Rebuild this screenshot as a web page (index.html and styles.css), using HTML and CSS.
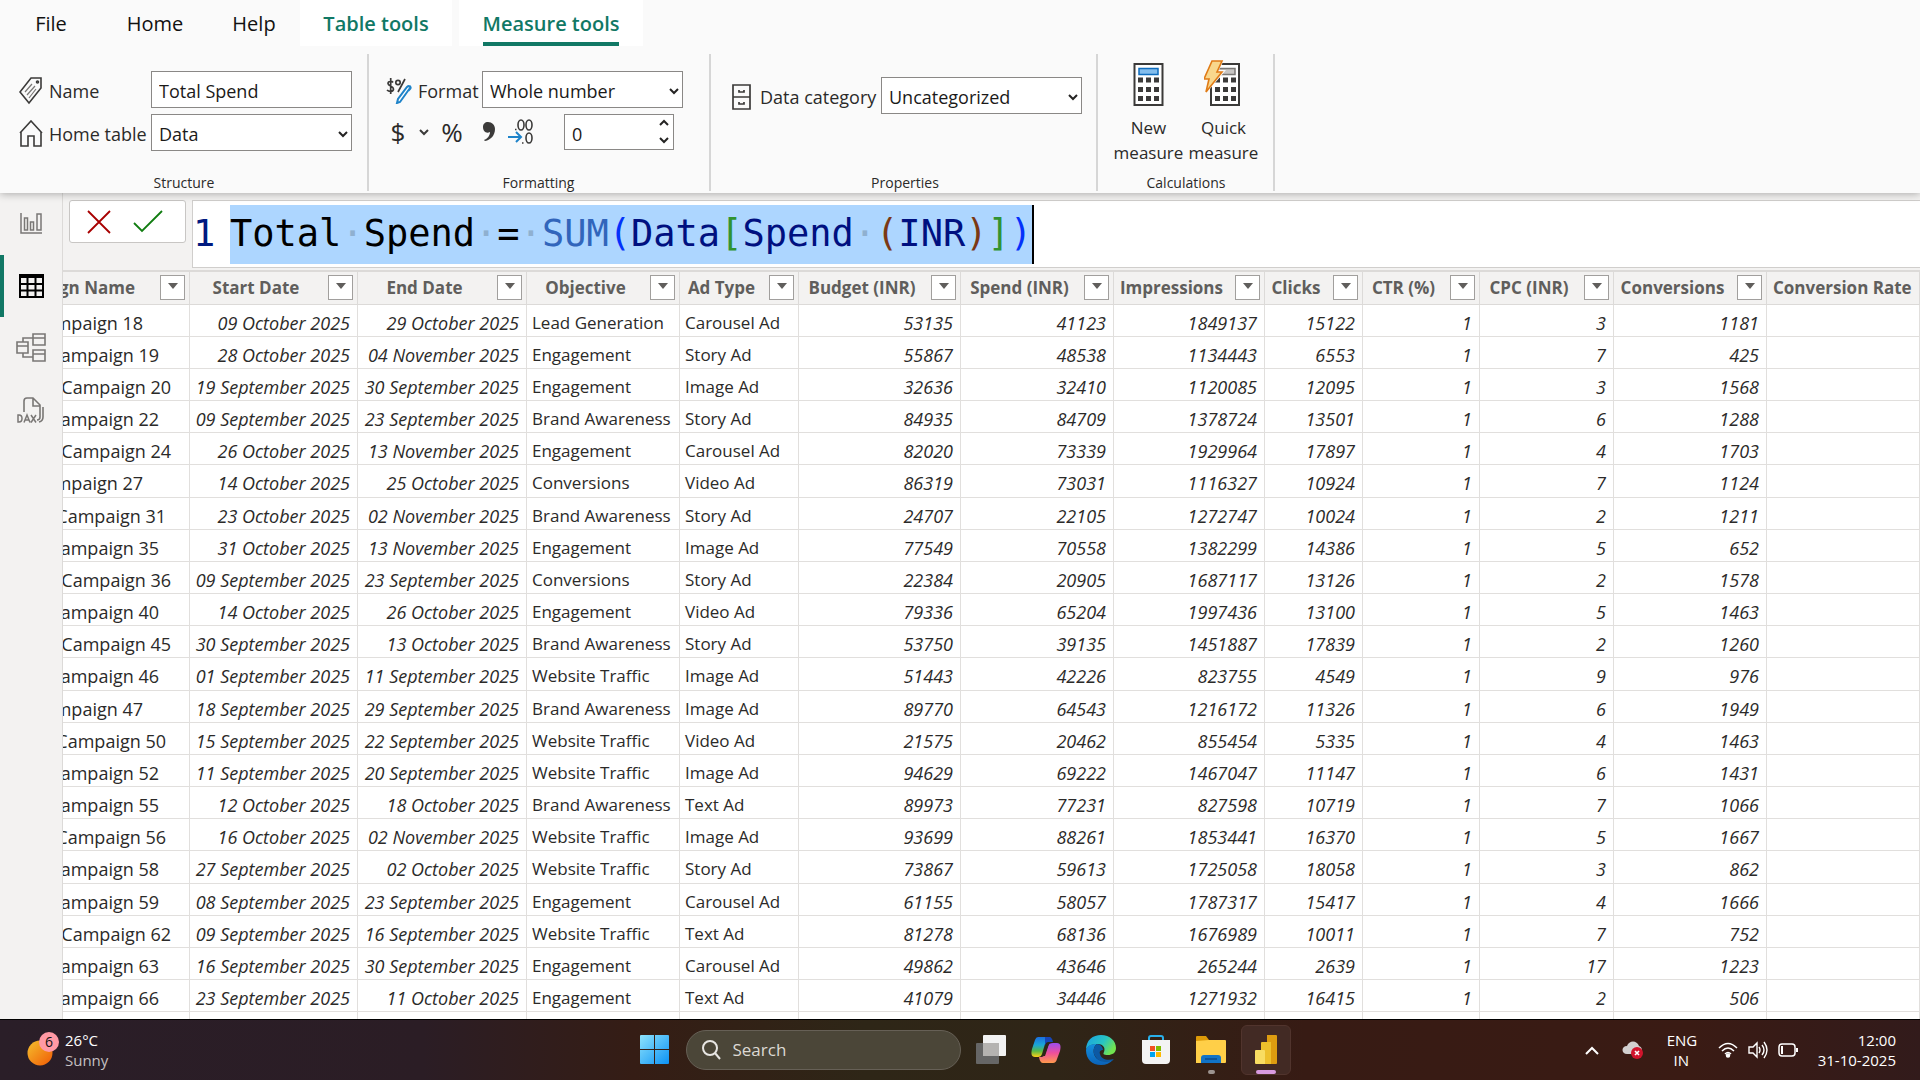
FILE: index.html
```html
<!DOCTYPE html>
<html lang="en">
<head>
<meta charset="utf-8">
<title>Table view</title>
<link rel="stylesheet" href="styles.css">
</head>
<body>
<header class="ribbon">
  <nav class="tabs">
    <a href="#" class="tab tab-file">File</a>
    <a href="#" class="tab tab-home">Home</a>
    <a href="#" class="tab tab-help">Help</a>
    <a href="#" class="tab tab-context">Table tools</a>
    <a href="#" class="tab tab-context tab-active" aria-current="page"><span>Measure tools</span></a>
  </nav>
  <div class="groups">
    <section class="group group-structure">
      <div class="fields">
        <label class="caption" for="name"><svg width="24" height="28" viewBox="0 0 24 28" fill="none" stroke="#3b3a39" stroke-width="1.6"><path d="M12 1h10v10L10 26 1 15z"/><circle cx="18.500" cy="5" r="1"/><path d="M6 15l7-8M8 18l8-9M10 21l7-9" stroke="#797775" stroke-width="1.200"/></svg>Name</label>
        <input class="box" id="name" type="text" value="Total Spend">
        <label class="caption" for="home"><svg width="24" height="28" viewBox="0 0 24 28" fill="none" stroke="#3b3a39" stroke-width="1.600"><path d="M1 13L12 1l11 12M2 12v14h7V16h6v10h7V12"/></svg>Home table</label>
        <div class="pick"><select class="box" id="home"><option>Data</option></select><svg class="chev" viewBox="0 0 10 7"><path d="M1 1l4 4 4-4"/></svg></div>
      </div>
      <div class="group-name">Structure</div>
    </section>
    <section class="group group-format">
      <div class="line">
        <label class="caption" for="format"><svg width="26" height="26" viewBox="0 0 26 26" fill="none" stroke="#3b3a39" stroke-width="1.700"><path d="M7 4.500C6 3 2 3 2 5.500S7.500 8 7.500 11 3 14 1 12M4.700 0v16M19 1l-7 13"/><circle cx="12" cy="4.500" r="2.200"/><path d="M24 10l-10 14-3 1 1-4 9-12c2-2 5 0 3 2z" fill="#fff" stroke="#1e83c9" stroke-width="2"/></svg>Format</label>
        <div class="pick"><select class="box" id="format"><option>Whole number</option></select><svg class="chev" viewBox="0 0 10 7"><path d="M1 1l4 4 4-4"/></svg></div>
      </div>
      <div class="line tools">
        <button class="tool glyph" type="button">$</button>
        <button class="tool" type="button" aria-label="Currency list"><svg width="10" height="7" viewBox="0 0 10 7" fill="none" stroke="#3b3a39" stroke-width="2"><path d="M1 1l4 4 4-4"/></svg></button>
        <button class="tool glyph" type="button">%</button>
        <button class="tool" type="button" aria-label="Thousands separator"><svg width="12" height="20" viewBox="0 0 12 20"><path d="M5 0c4 0 7 3 7 7 0 6-4 11-10 12l-1-1c3-1 6-4 6-8-4 2-7-1-7-5 0-3 2-5 5-5z" fill="#3b3a39"/></svg></button>
        <button class="tool decimals" type="button" aria-label="Decimal places"><svg width="26" height="26" viewBox="0 0 26 26" fill="none" stroke="#3b3a39" stroke-width="1.600"><ellipse cx="13" cy="6" rx="3" ry="5"/><ellipse cx="21" cy="6" rx="3" ry="5"/><ellipse cx="21" cy="19" rx="3" ry="5"/><path d="M7 10.500h1.500M14 24h1.500"/><path d="M0 18h13M8 13l5 5-5 5" stroke="#1e83c9" stroke-width="2"/></svg></button>
        <div class="pick spin"><input class="box" type="text" value="0" aria-label="Decimals"><svg width="10" height="25" viewBox="0 0 10 25"><path d="M1 6l4-4 4 4M1 19l4 4 4-4"/></svg></div>
      </div>
      <div class="group-name">Formatting</div>
    </section>
    <section class="group group-props">
      <div class="line">
        <label class="caption" for="cat"><svg width="19" height="26" viewBox="0 0 19 26" fill="none" stroke="#3b3a39" stroke-width="1.700"><path d="M1 1h17v24H1zM1 13h17M7 6v2h5V6M7 18v2h5v-2"/></svg>Data category</label>
        <div class="pick"><select class="box" id="cat"><option>Uncategorized</option></select><svg class="chev" viewBox="0 0 10 7"><path d="M1 1l4 4 4-4"/></svg></div>
      </div>
      <div class="group-name">Properties</div>
    </section>
    <section class="group group-calc">
      <div class="line">
        <button class="big" type="button"><svg width="40" height="47" viewBox="0 0 40 47"><path d="M5.500 4h28v41h-28z" fill="#fff" stroke="#3b3a39" stroke-width="2"/><path d="M10 8.500h19v6H10z" fill="#83bdec" stroke="#0f6cbd" stroke-width="1.500"/><path d="M9 17.500h5v5H9zM17 17.500h5v5h-5zM25 17.500h5v5h-5zM9 27h5v5H9zM17 27h5v5h-5zM25 27h5v5h-5zM9 36h5v5H9zM17 36h5v5h-5zM25 36h5v5h-5z" fill="#3b3a39"/></svg>New<br>measure</button>
        <button class="big" type="button"><svg width="40" height="47" viewBox="0 0 40 47"><path d="M7 4h28v41H7z" fill="#fff" stroke="#3b3a39" stroke-width="2"/><path d="M13 8.500h18v6H13z" fill="#c8c6c4" stroke="#797775" stroke-width="1.500"/><path d="M11 17.500h5v5h-5zM19 17.500h5v5h-5zM27 17.500h5v5h-5zM11 27h5v5h-5zM19 27h5v5h-5zM27 27h5v5h-5zM11 36h5v5h-5zM19 36h5v5h-5zM27 36h5v5h-5z" fill="#3b3a39"/><path d="M6 0h14l-5 10h7L5 30v4H0V0z" fill="#fafafa"/><path d="M8 1h10l-5 11h5L2 32l3-13H0z" fill="#f8d78c" stroke="#e07b16" stroke-width="1.600"/></svg>Quick<br>measure</button>
      </div>
      <div class="group-name">Calculations</div>
    </section>
  </div>
</header>
<div class="work">
  <nav class="rail">
    <a href="#" aria-label="Report view"><svg width="30" height="30" viewBox="0 0 30 30" fill="none" stroke="#797775" stroke-width="1.500"><path d="M5 4v20h21M8.500 9h3v12h-3zM14.500 13h3v8h-3zM21 5h4v16h-4z"/></svg></a>
    <a href="#" class="on" aria-label="Table view"><svg width="30" height="30" viewBox="0 0 30 30" fill="none" stroke="#000" stroke-width="2"><path d="M4 4h23v22H4z"/><path d="M4 6h23M4 13h23M4 19.500h23M11.500 6v20M19.500 6v20"/></svg></a>
    <a href="#" aria-label="Model view"><svg width="30" height="30" viewBox="0 0 30 30" fill="none" stroke="#797775" stroke-width="1.600"><path d="M1 9h11v11H1zM1 13h11M17 1h12v11H17zM17 5h12M17 17h12v11H17zM17 21h12M7 9V5h10M7 20v4h10"/></svg></a>
    <a href="#" aria-label="DAX query view"><svg width="30" height="30" viewBox="0 0 30 30" fill="none" stroke="#797775" stroke-width="1.600"><path d="M8 17V6q0-3 3-3h6l7 7v12q0 3-3 3M17 3v8h7M27 12v10q0 4-4 5"/><path d="M2 20v7h1q3 0 3-3.500T3 20zM8 27.500l3-7.500 3 7.500M9 25h4M15 20l5 7.500M20 20l-5 7.500" stroke-width="1.500"/></svg></a>
  </nav>
  <main class="data">
    <div class="formula">
      <div class="commit">
        <button type="button" aria-label="Cancel"><svg width="24" height="24" viewBox="0 0 24 24" fill="none" stroke="#a80000" stroke-width="1.800"><path d="M1 1l22 22M23 1L1 23"/></svg></button>
        <button type="button" aria-label="Commit"><svg width="30" height="24" viewBox="0 0 30 24" fill="none" stroke="#107c10" stroke-width="1.800"><path d="M1 13l8 8L29 1"/></svg></button>
      </div>
      <div class="editor"><span class="num">1</span><code>Total<i>·</i>Spend<i>·</i>=<i>·</i><span class="fn">SUM</span><span class="p1">(</span><span class="col">Data</span><span class="p2">[</span><span class="col">Spend</span><i>·</i><span class="p3">(</span><span class="col">INR</span><span class="p3">)</span><span class="p2">]</span><span class="p1">)</span></code></div>
    </div>
    <div class="grid">
      <table>
        <colgroup><col class="w180"><col class="w168"><col class="w169"><col class="w153"><col class="w119"><col class="w162"><col class="w153"><col class="w151"><col class="w98"><col class="w117"><col class="w134"><col class="w153"><col></colgroup>
        <thead><tr>
          <th><div>Campaign Name<button type="button" aria-label="Filter"></button></div></th>
          <th><div><span>Start Date</span><button type="button" aria-label="Filter"></button></div></th>
          <th><div><span>End Date</span><button type="button" aria-label="Filter"></button></div></th>
          <th><div><span>Objective</span><button type="button" aria-label="Filter"></button></div></th>
          <th><div><span>Ad Type</span><button type="button" aria-label="Filter"></button></div></th>
          <th><div><span>Budget (INR)</span><button type="button" aria-label="Filter"></button></div></th>
          <th><div><span>Spend (INR)</span><button type="button" aria-label="Filter"></button></div></th>
          <th><div><span>Impressions</span><button type="button" aria-label="Filter"></button></div></th>
          <th><div><span>Clicks</span><button type="button" aria-label="Filter"></button></div></th>
          <th><div><span>CTR (%)</span><button type="button" aria-label="Filter"></button></div></th>
          <th><div><span>CPC (INR)</span><button type="button" aria-label="Filter"></button></div></th>
          <th><div><span>Conversions</span><button type="button" aria-label="Filter"></button></div></th>
          <th class="last"><div>Conversion Rate</div></th>
        </tr></thead>
        <tbody>
          <tr><td class="s4">Campaign 18<td>09 October 2025<td>29 October 2025<td>Lead Generation<td>Carousel Ad<td>53135<td>41123<td>1849137<td>15122<td>1<td>3<td>1181<td>
          <tr><td class="s3">Campaign 19<td>28 October 2025<td>04 November 2025<td>Engagement<td>Story Ad<td>55867<td>48538<td>1134443<td>6553<td>1<td>7<td>425<td>
          <tr><td class="s1">Campaign 20<td>19 September 2025<td>30 September 2025<td>Engagement<td>Image Ad<td>32636<td>32410<td>1120085<td>12095<td>1<td>3<td>1568<td>
          <tr><td class="s3">Campaign 22<td>09 September 2025<td>23 September 2025<td>Brand Awareness<td>Story Ad<td>84935<td>84709<td>1378724<td>13501<td>1<td>6<td>1288<td>
          <tr><td class="s1">Campaign 24<td>26 October 2025<td>13 November 2025<td>Engagement<td>Carousel Ad<td>82020<td>73339<td>1929964<td>17897<td>1<td>4<td>1703<td>
          <tr><td class="s4">Campaign 27<td>14 October 2025<td>25 October 2025<td>Conversions<td>Video Ad<td>86319<td>73031<td>1116327<td>10924<td>1<td>7<td>1124<td>
          <tr><td class="s2">Campaign 31<td>23 October 2025<td>02 November 2025<td>Brand Awareness<td>Story Ad<td>24707<td>22105<td>1272747<td>10024<td>1<td>2<td>1211<td>
          <tr><td class="s3">Campaign 35<td>31 October 2025<td>13 November 2025<td>Engagement<td>Image Ad<td>77549<td>70558<td>1382299<td>14386<td>1<td>5<td>652<td>
          <tr><td class="s1">Campaign 36<td>09 September 2025<td>23 September 2025<td>Conversions<td>Story Ad<td>22384<td>20905<td>1687117<td>13126<td>1<td>2<td>1578<td>
          <tr><td class="s3">Campaign 40<td>14 October 2025<td>26 October 2025<td>Engagement<td>Video Ad<td>79336<td>65204<td>1997436<td>13100<td>1<td>5<td>1463<td>
          <tr><td class="s1">Campaign 45<td>30 September 2025<td>13 October 2025<td>Brand Awareness<td>Story Ad<td>53750<td>39135<td>1451887<td>17839<td>1<td>2<td>1260<td>
          <tr><td class="s3">Campaign 46<td>01 September 2025<td>11 September 2025<td>Website Traffic<td>Image Ad<td>51443<td>42226<td>823755<td>4549<td>1<td>9<td>976<td>
          <tr><td class="s4">Campaign 47<td>18 September 2025<td>29 September 2025<td>Brand Awareness<td>Image Ad<td>89770<td>64543<td>1216172<td>11326<td>1<td>6<td>1949<td>
          <tr><td class="s2">Campaign 50<td>15 September 2025<td>22 September 2025<td>Website Traffic<td>Video Ad<td>21575<td>20462<td>855454<td>5335<td>1<td>4<td>1463<td>
          <tr><td class="s3">Campaign 52<td>11 September 2025<td>20 September 2025<td>Website Traffic<td>Image Ad<td>94629<td>69222<td>1467047<td>11147<td>1<td>6<td>1431<td>
          <tr><td class="s3">Campaign 55<td>12 October 2025<td>18 October 2025<td>Brand Awareness<td>Text Ad<td>89973<td>77231<td>827598<td>10719<td>1<td>7<td>1066<td>
          <tr><td class="s2">Campaign 56<td>16 October 2025<td>02 November 2025<td>Website Traffic<td>Image Ad<td>93699<td>88261<td>1853441<td>16370<td>1<td>5<td>1667<td>
          <tr><td class="s3">Campaign 58<td>27 September 2025<td>02 October 2025<td>Website Traffic<td>Story Ad<td>73867<td>59613<td>1725058<td>18058<td>1<td>3<td>862<td>
          <tr><td class="s3">Campaign 59<td>08 September 2025<td>23 September 2025<td>Engagement<td>Carousel Ad<td>61155<td>58057<td>1787317<td>15417<td>1<td>4<td>1666<td>
          <tr><td class="s1">Campaign 62<td>09 September 2025<td>16 September 2025<td>Website Traffic<td>Text Ad<td>81278<td>68136<td>1676989<td>10011<td>1<td>7<td>752<td>
          <tr><td class="s3">Campaign 63<td>16 September 2025<td>30 September 2025<td>Engagement<td>Carousel Ad<td>49862<td>43646<td>265244<td>2639<td>1<td>17<td>1223<td>
          <tr><td class="s3">Campaign 66<td>23 September 2025<td>11 October 2025<td>Engagement<td>Text Ad<td>41079<td>34446<td>1271932<td>16415<td>1<td>2<td>506<td>
          <tr><td><td><td><td><td><td><td><td><td><td><td><td><td>
        </tbody>
      </table>
    </div>
  </main>
</div>
<footer class="taskbar">
  <button class="weather" type="button">
    <svg width="34" height="38" viewBox="0 0 34 38"><defs><linearGradient id="sun" x1="0" y1="0" x2="1" y2="1"><stop offset="0" stop-color="#f5c02e"/><stop offset="1" stop-color="#f05a05"/></linearGradient></defs><circle cx="13" cy="23" r="12.500" fill="url(#sun)"/><circle cx="22" cy="12" r="10" fill="#ff99a4"/><text x="22" y="17" text-anchor="middle" class="badge">6</text></svg>
    <span class="weather-text">26°C<br><span class="dim">Sunny</span></span>
  </button>
  <div class="apps">
    <button type="button" class="app" aria-label="Start"><svg width="30" height="30" viewBox="0 0 30 30"><defs><linearGradient id="win" x1="0" y1="0" x2="1" y2="1"><stop offset="0" stop-color="#8ee3fc"/><stop offset="1" stop-color="#0c92f5"/></linearGradient></defs><path d="M0 1q0-1 1-1h13v14H0zM15 0h13q1 0 1 1v13H15zM0 15h14v14H1q-1 0-1-1zM15 15h14v13q0 1-1 1H15z" fill="url(#win)"/></svg></button>
    <label class="search"><svg width="20" height="20" viewBox="0 0 20 20" fill="none" stroke="#e8e6e3" stroke-width="2"><circle cx="8" cy="8" r="7"/><path d="M13 13l5 6"/></svg><input type="text" placeholder="Search" aria-label="Search"></label>
    <button type="button" class="app" aria-label="Task view"><svg width="30" height="30" viewBox="0 0 30 30"><rect y="8" width="23" height="21" rx="1" fill="#666"/><rect x="7" width="23" height="21" rx="1" fill="#f2f2f2"/><path d="M7 8h16v13H7z" fill="#b5b3b1"/></svg></button>
    <button type="button" class="app" aria-label="Copilot"><svg width="30" height="30" viewBox="0 0 30 30"><defs><linearGradient id="ca" x1="0" y1="0" x2="0" y2="1"><stop offset="0" stop-color="#1b6fe0"/><stop offset=".4" stop-color="#1aa6d8"/><stop offset=".7" stop-color="#58b947"/><stop offset="1" stop-color="#ffd117"/></linearGradient><linearGradient id="cb" x1="0" y1="0" x2="0" y2="1"><stop offset="0" stop-color="#9b4df0"/><stop offset=".5" stop-color="#ee4e9b"/><stop offset="1" stop-color="#ff9a4c"/></linearGradient></defs><path d="M7 2h10q4 0 3 4h-3q-2 0-3 3l-3 10q-1 3-4 3H4c-4 0-4-4-3-8L4 5q1-3 3-3z" fill="url(#ca)"/><path d="M14 2h4q3 0 4 5h-5q-2 0-3 3z" fill="#1745b8"/><path d="M22 8h4c4 0 4 4 3 8l-3 8q-1 4-4 4H12q-3 0-4-6h3q2 0 3-3l3-8q1-3 5-3z" fill="url(#cb)"/><path d="M17 9h1l-4 12h-2z" fill="#2c2617"/></svg></button>
    <button type="button" class="app" aria-label="Edge"><svg width="30" height="30" viewBox="0 0 30 30"><defs><linearGradient id="ea" x1="0" y1="0" x2="1" y2=".5"><stop offset="0" stop-color="#1aa0e4"/><stop offset=".6" stop-color="#28c4c3"/><stop offset="1" stop-color="#72e350"/></linearGradient><linearGradient id="eb" x1="0" y1="0" x2="0" y2="1"><stop offset="0" stop-color="#138fdd"/><stop offset="1" stop-color="#0b62b8"/></linearGradient></defs><path d="M0 15C0 5 7 0 15 0c9 0 15 6 15 13 0 5-4 7-8 7-5 0-5-1-4-3 2-5-2-8-6-8C6 9 1 11 0 15z" fill="url(#ea)"/><path d="M0 15C1 10 6 9 11 9c-3 2-4 6-3 10 2 6 8 9 19 6-3 3-7 5-12 5C6 30 0 24 0 15z" fill="url(#eb)"/><path d="M11 9c-3 2-4 6-3 10 2 5 6 8 12 8 4 0 6-1 8-3-7 2-13 0-14-5-1-3 1-4 3-4 0-3-3-6-6-6z" fill="#0c59a4"/></svg></button>
    <button type="button" class="app" aria-label="Store"><svg width="30" height="30" viewBox="0 0 30 30"><path d="M8 6V3q0-2 2-2h10q2 0 2 2v3" fill="none" stroke="#29b0ea" stroke-width="2"/><path d="M1 5h28v20q0 4-4 4H5q-4 0-4-4z" fill="#f3f3f3"/><path d="M9 11h5v5H9z" fill="#f25022"/><path d="M15 11h5v5h-5z" fill="#7fba00"/><path d="M9 17h5v5H9z" fill="#00a4ef"/><path d="M15 17h5v5h-5z" fill="#ffb900"/></svg></button>
    <button type="button" class="app running" aria-label="File Explorer"><svg width="30" height="30" viewBox="0 0 30 30"><path d="M0 2q0-1 1-1h9l3 4v6H0z" fill="#dd9a08"/><path d="M0 6l13-1h16q1 0 1 1v21q0 1-1 1H0z" fill="#ffcf48"/><path d="M5 28v-5q0-3 3-3h14q3 0 3 3v5z" fill="#1173c7"/><path d="M9 24h12" stroke="#0a4a8c" stroke-width="1.500"/></svg></button>
    <button type="button" class="app running current" aria-label="Power BI"><svg width="30" height="30" viewBox="0 0 30 30"><path d="M16 0h9q1 0 1 1v27q0 1-1 1h-9z" fill="#dd9c10"/><path d="M10 8q0-1 1-1h9v22H10z" fill="#edc02c"/><path d="M4 16q0-1 1-1h8q1 0 1 1v13H5q-1 0-1-1z" fill="#f8dd62"/></svg></button>
  </div>
  <div class="tray">
    <svg width="14" height="9" viewBox="0 0 14 9" fill="none" stroke="#fff" stroke-width="2"><path d="M1 8l6-6 6 6"/></svg>
    <svg width="22" height="20" viewBox="0 0 22 20"><path d="M5 14c-6 0-6-8 0-8 2-6 10-6 12 0 4 1 4 8 0 8z" fill="#d2d0d0"/><circle cx="15" cy="13" r="6" fill="#d1142c"/><path d="M13 11l4 4M17 11l-4 4" stroke="#fff" stroke-width="1.600"/></svg>
    <span class="lang">ENG<br>IN</span>
    <span class="status">
      <svg width="20" height="16" viewBox="0 0 20 16" fill="none" stroke="#fff" stroke-width="1.500"><path d="M1 6q9-9 18 0M4 9q6-6 12 0M7 12q3-3 6 0"/><circle cx="10" cy="13.500" r="1.500" fill="#fff"/></svg>
      <svg width="20" height="18" viewBox="0 0 20 18" fill="none" stroke="#fff" stroke-width="1.400"><path d="M1 6h4l4-4v14l-4-4H1zM11 6q2 3 0 6M14 4q4 5 0 10M16 1q6 8 0 16"/></svg>
      <svg width="20" height="14" viewBox="0 0 20 14"><rect x="1" y="1" width="16" height="12" rx="3" fill="none" stroke="#fff" stroke-width="1.500"/><path d="M3 3h2v8H3zM18 5h2v4h-2z" fill="#fff"/></svg>
    </span>
    <span class="clock">12:00<br>31-10-2025</span>
  </div>
</footer>
</body>
</html>
```
FILE: styles.css
```css
*, *::before, *::after { box-sizing: border-box; }
body {
  margin: 0;
  height: 100vh;
  display: flex;
  flex-direction: column;
  overflow: hidden;
  font-family: "Open Sans", "Noto Sans", sans-serif;
  font-size: 17px;
  line-height: 24px;
  color: #2b2a29;
  background: #f3f2f1;
}
button, input, select { font: inherit; color: inherit; margin: 0; padding: 0; }
button { border: 0; background: none; }
svg { display: block; flex: none; }

/* Ribbon */
.ribbon {
  position: relative;
  background: #fafafa;
  box-shadow: 0 1px 8px rgba(0, 0, 0, .3);
}
.tabs { display: flex; height: 46px; font-size: 20px; line-height: 48px; }
.tab { color: #111; text-decoration: none; white-space: nowrap; text-align: center; }
.tab-file { width: 102px; }
.tab-home { width: 106px; }
.tab-help { width: 92px; }
.tab-context { width: 152px; font-weight: 600; color: #117865; background: #fff; }
.tab-active { width: 184px; margin-left: 7px; }
.tab-active span { display: inline-block; height: 46px; border-bottom: 4px solid #117865; }
.groups { display: flex; height: 147px; padding: 8px 0 2px; }
.group {
  display: flex;
  flex-direction: column;
  padding-top: 17px;
  border-right: 2px solid #d6d6d6;
}
.group-structure { width: 369px; padding-left: 19px; }
.group-format { width: 342px; padding-left: 17px; }
.group-props { width: 387px; padding: 23px 0 0 21px; }
.group-calc { width: 177px; padding: 6px 0 0 13px; }
.group-name { margin: auto 18px 0 0; font-size: 14px; line-height: 16px; text-align: center; }
.group-calc .group-name { margin-right: 12px; }
.fields { display: grid; grid-template-columns: 132px 201px; row-gap: 6px; }
.line { display: flex; }
.line + .line { margin-top: 6px; }
.caption { display: flex; align-items: center; gap: 6px; padding-top: 2px; font-size: 18px; white-space: nowrap; }
.group-format .caption { width: 96px; }
.group-props .caption { width: 149px; gap: 9px; }
.box {
  display: block;
  width: 201px;
  height: 37px;
  padding: 3px 7px 0;
  border: 1px solid #8a8886;
  border-radius: 0;
  background: #fff;
  appearance: none;
  color: #1b1a19;
  font-size: 18px;
}
.pick { position: relative; }
.chev { position: absolute; right: 4px; top: 17px; width: 10px; height: 7px; pointer-events: none; }
.pick svg { fill: none; stroke: #252423; stroke-width: 2; }
.tools { align-items: center; padding-left: 3px; }
.tool { display: flex; align-items: center; justify-content: center; }
.glyph { width: 18px; font-size: 26px; font-weight: 400; }
.tools .tool + .tool { margin-left: 13px; }
.tools .tool.glyph + .tool { margin-left: 12px; }
.tools .tool + .glyph { margin-left: 14px; }
.tools .glyph + .tool:nth-child(4) { margin-left: 22px; }
.decimals { width: 26px; }
.spin { margin-left: 30px; }
.spin .box { width: 110px; height: 36px; }
.spin svg { position: absolute; right: 5px; top: 5px; }
.big { display: flex; flex-direction: column; align-items: center; width: 75px; white-space: nowrap; line-height: 25px; }
.big svg { margin-bottom: 8px; }

/* Work area */
.work { flex: 1; min-height: 0; display: flex; }
.rail { width: 63px; border-right: 1px solid #dcdad8; }
.rail a { display: flex; height: 62px; align-items: center; justify-content: center; }
.rail a.on { border-left: 4px solid #117865; padding-right: 4px; }
.data { flex: 1; min-width: 0; display: flex; flex-direction: column; }
.formula { display: flex; align-items: flex-start; gap: 6px; padding: 7px 0 3px 6px; }
.commit {
  display: flex;
  align-items: center;
  gap: 22px;
  width: 117px;
  height: 43px;
  padding-left: 17px;
  border: 1px solid #c8c6c4;
  border-radius: 3px;
  background: #fff;
}
.editor {
  flex: 1;
  display: flex;
  height: 68px;
  padding-top: 4px;
  border: 1px solid #d0cecc;
  border-right: 0;
  background: #fff;
  font: 37px/58px "DejaVu Sans Mono", monospace;
  white-space: pre;
}
.num { width: 37px; color: #001a80; }
.editor code { height: 59px; font: inherit; color: #000; background: #add6ff; border-right: 2px solid #000; }
.editor i { font-style: normal; color: #8fb0d0; }
.fn { color: #3165bb; }
.col { color: #001080; }
.p1 { color: #0431fa; }
.p2 { color: #319331; }
.p3 { color: #7b3814; }

/* Data grid */
.grid { flex: 1; min-height: 0; overflow: hidden; background: #fff; box-shadow: 0 -1px #dcdad8; }
table {
  width: calc(100% + 54px);
  margin-left: -54px;
  border-collapse: collapse;
  table-layout: fixed;
}
.w180 { width: 180px; } .w168 { width: 168px; } .w169 { width: 169px; } .w153 { width: 153px; }
.w119 { width: 119px; } .w162 { width: 162px; } .w151 { width: 151px; } .w98 { width: 98px; }
.w117 { width: 117px; } .w134 { width: 134px; }
th {
  height: 33px;
  padding: 0 4px 1px 6px;
  border: 1px solid #dcdad8;
  background: #f3f2f1;
  color: #605e5c;
  font-weight: 700;
}
th div { display: flex; align-items: center; justify-content: flex-end; white-space: nowrap; }
th span { flex: 1; text-align: center; margin-right: 12px; }
th:first-child button { margin-left: 25px; }
th.last div { justify-content: flex-start; }
th button { flex: none; width: 25px; height: 25px; border: 1px solid #a19f9d; background: #fff; }
th button::before {
  content: "";
  display: block;
  width: 10px;
  margin: -3px auto 0;
  border: 5px solid transparent;
  border-top: 6px solid #605e5c;
  border-bottom: 0;
}
td {
  height: 32px;
  padding: 4px 7px 0 5px;
  border: 1px solid #e1dfdd;
  line-height: 26px;
  white-space: nowrap;
  text-align: right;
  font-size: 18px;
  font-style: italic;
}
tr:nth-child(6n) td { height: 33px; }
td:nth-child(1) { font-style: normal; }
td:nth-child(4), td:nth-child(5) { text-align: left; font-size: 17px; font-style: normal; padding-right: 0; }
td.s1 { padding-right: 18px; }
td.s2 { padding-right: 23px; }
td.s3 { padding-right: 30px; }
td.s4 { padding-right: 46px; }

/* Taskbar */
.taskbar {
  flex: none;
  display: grid;
  grid-template-columns: 1fr auto 1fr;
  align-items: center;
  height: 61px;
  border-top: 1px solid #000;
  background: linear-gradient(90deg, #2a1e28 0%, #2b1d25 22%, #351d15 33%, #2e2617 45%, #2f2517 55%, #371b14 68%, #3a1b14 88%, #321b1b 100%);
  color: #fff;
  font-size: 15px;
  line-height: 20px;
}
.weather { display: flex; gap: 4px; padding-left: 27px; text-align: left; }
.badge { font-size: 14px; fill: #111; }
.dim { color: #c5c0c2; }
.apps { display: flex; align-items: center; padding-left: 5px; }
.app { position: relative; display: flex; width: 50px; height: 50px; margin-right: 5px; align-items: center; justify-content: center; }
.search {
  display: flex;
  align-items: center;
  gap: 11px;
  width: 275px;
  height: 40px;
  margin: 0 5px 0 1px;
  padding-left: 15px;
  border: 1px solid #666056;
  border-radius: 20px;
  background: #4b4638;
  font-size: 17px;
}
.search input { width: 200px; border: 0; background: none; outline: 0; }
.search input::placeholder { color: #dcd9d3; opacity: 1; }
.current { border: 1px solid #51342d; border-radius: 6px; background: #422a24; }
.running::after { content: ""; position: absolute; bottom: 1px; left: 22px; width: 7px; height: 4px; border-radius: 2px; background: #9c9490; }
.current::after { bottom: 0; left: 14px; width: 20px; background: #d99be0; }
.tray { display: flex; align-items: center; justify-content: flex-end; padding-right: 24px; }
.tray > svg { margin-right: 23px; }
.lang { width: 29px; text-align: center; }
.status { display: flex; align-items: center; gap: 10px; margin: 0 20px 0 22px; }
.clock { text-align: right; }
```
